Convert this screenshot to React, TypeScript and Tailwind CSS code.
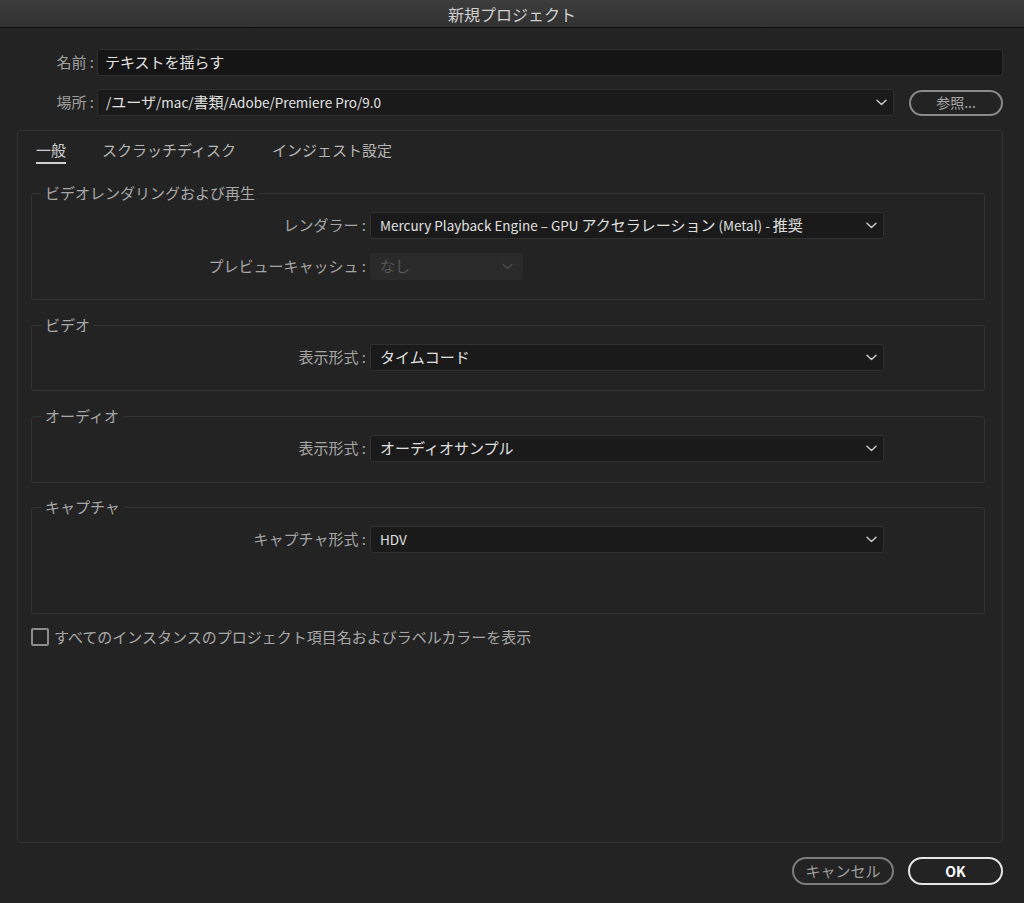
import React from "react";

const font = { fontFamily: '"Noto Sans CJK JP", "Noto Sans", sans-serif' };

function Mixed({ text }: { text: string }) {
  const parts = text.match(/[\x20-\x7E\u2013]+|[^\x20-\x7E\u2013]+/g) || [];
  return (
    <span>
      {parts.map((p, i) =>
        /^[\x20-\x7E\u2013]+$/.test(p) ? (
          <span key={i} className="text-[13.5px]">{p}</span>
        ) : (
          <span key={i}>{p}</span>
        )
      )}
    </span>
  );
}

function Chevron({ color = "#c8c8c8" }: { color?: string }) {
  return (
    <svg width="11" height="7" viewBox="0 0 11 7" fill="none">
      <path d="M1 1.2 L5.5 5.5 L10 1.2" stroke={color} strokeWidth="1.5" strokeLinecap="round" strokeLinejoin="round" />
    </svg>
  );
}

function Select({ value, width = "w-[514px]", disabled = false }: { value: string; width?: string; disabled?: boolean }) {
  if (disabled) {
    return (
      <div className={`${width} h-[27px] flex items-center justify-between pl-[10px] pr-[10px] rounded-[3px] bg-[#2a2a2a] text-[#565656]`}>
        <span>{value}</span>
        <Chevron color="#4a4a4a" />
      </div>
    );
  }
  return (
    <div className={`${width} h-[27px] flex items-center justify-between pl-[9px] pr-[6px] rounded-[3px] bg-[#1a1a1a] border border-[#303030] text-[#e0e0e0]`}>
      <Mixed text={value} />
      <Chevron />
    </div>
  );
}

function Row({ label, children }: { label: string; children: React.ReactNode }) {
  return (
    <div className="flex items-center">
      <div className="w-[338px] text-right text-[#a5a5a5] pr-[4px] whitespace-nowrap">{label}</div>
      {children}
    </div>
  );
}

function Group({ title, children, pb = "pb-[19px]", extra = "" }: { title: string; children: React.ReactNode; pb?: string; extra?: string }) {
  return (
    <fieldset className={`border border-[#333333] rounded-[3px] pt-[9px] ${pb} ${extra}`}>
      <legend className="ml-[9px] px-[4px] text-[#a8a8a8] leading-[20px]">{title}</legend>
      {children}
    </fieldset>
  );
}

export default function App() {
  return (
    <div style={font} className="w-[1024px] h-[903px] bg-[#232323] flex flex-col text-[15px] overflow-hidden">
      {/* Title bar */}
      <div className="h-[28px] flex-none flex items-center justify-center bg-gradient-to-b from-[#3d3d3d] to-[#313131] border-b border-[#0e0e0e] text-[#cfcfcf] text-[16px]">
        新規プロジェクト
      </div>

      <div className="flex-1 flex flex-col pl-[17px] pr-[21px]">
        {/* Name */}
        <div className="flex items-center mt-[21px]">
          <div className="w-[80px] text-right text-[#a0a0a0] pr-[3px] whitespace-nowrap">名前 :</div>
          <div className="flex-1 h-[27px] flex items-center pl-[7px] rounded-[3px] bg-[#151515] border border-[#2e2e2e] text-[#e2e2e2]">
            テキストを揺らす
          </div>
        </div>

        {/* Location */}
        <div className="flex items-center mt-[13px]">
          <div className="w-[80px] text-right text-[#a0a0a0] pr-[3px] whitespace-nowrap">場所 :</div>
          <div className="w-[797px] h-[27px] flex items-center justify-between pl-[8px] pr-[6px] rounded-[3px] bg-[#1a1a1a] border border-[#2e2e2e] text-[#e2e2e2]">
            <Mixed text="/ユーザ/mac/書類/Adobe/Premiere Pro/9.0" />
            <Chevron />
          </div>
          <div className="ml-[15px] w-[94px] h-[26px] flex items-center justify-center rounded-full border-2 border-[#8a8a8a] text-[#a8a8a8] text-[14px]">
            参照...
          </div>
        </div>

        {/* Panel */}
        <div className="mt-[14px] h-[713px] border border-[#333333] rounded-[4px] flex flex-col pl-[13px] pr-[17px]">
          {/* Tabs */}
          <div className="flex items-start mt-[9px] ml-[5px] gap-[36px] text-[#b5b5b5]">
            <div className="flex flex-col items-stretch">
              <span className="leading-[20px] text-[#d0d0d0]">一般</span>
              <div className="h-[2px] mt-[2px] bg-[#cfcfcf]"></div>
            </div>
            <span className="leading-[20px]">スクラッチディスク</span>
            <span className="leading-[20px]">インジェスト設定</span>
          </div>

          <div className="mt-[19px] flex flex-col gap-[15px]">
            <Group title="ビデオレンダリングおよび再生">
              <div className="flex flex-col gap-[14px]">
                <Row label="レンダラー :">
                  <Select value="Mercury Playback Engine – GPU アクセラレーション (Metal) - 推奨" />
                </Row>
                <Row label="プレビューキャッシュ :">
                  <Select value="なし" width="w-[153px]" disabled />
                </Row>
              </div>
            </Group>

            <Group title="ビデオ">
              <Row label="表示形式 :">
                <Select value="タイムコード" />
              </Row>
            </Group>

            <Group title="オーディオ" pb="pb-[20px]">
              <Row label="表示形式 :">
                <Select value="オーディオサンプル" />
              </Row>
            </Group>

            <Group title="キャプチャ" pb="pb-[60px]" extra="-mt-[1px]">
              <Row label="キャプチャ形式 :">
                <Select value="HDV" />
              </Row>
            </Group>
          </div>

          {/* Checkbox */}
          <div className="flex items-center mt-[12px] text-[#a8a8a8]">
            <div className="w-[18px] h-[18px] rounded-[2px] border-2 border-[#8c8c8c]"></div>
            <span className="ml-[5px]">すべてのインスタンスのプロジェクト項目名およびラベルカラーを表示</span>
          </div>
        </div>

        {/* Buttons */}
        <div className="flex justify-end items-center gap-[14px] mt-[14px]">
          <div className="w-[102px] h-[28px] flex items-center justify-center rounded-full border-2 border-[#7c7c7c] text-[#9c9c9c] text-[15px]">
            キャンセル
          </div>
          <div className="w-[95px] h-[28px] flex items-center justify-center rounded-full border-2 border-[#e6e6e6] text-white font-bold text-[14px]">
            OK
          </div>
        </div>
      </div>
    </div>
  );
}
